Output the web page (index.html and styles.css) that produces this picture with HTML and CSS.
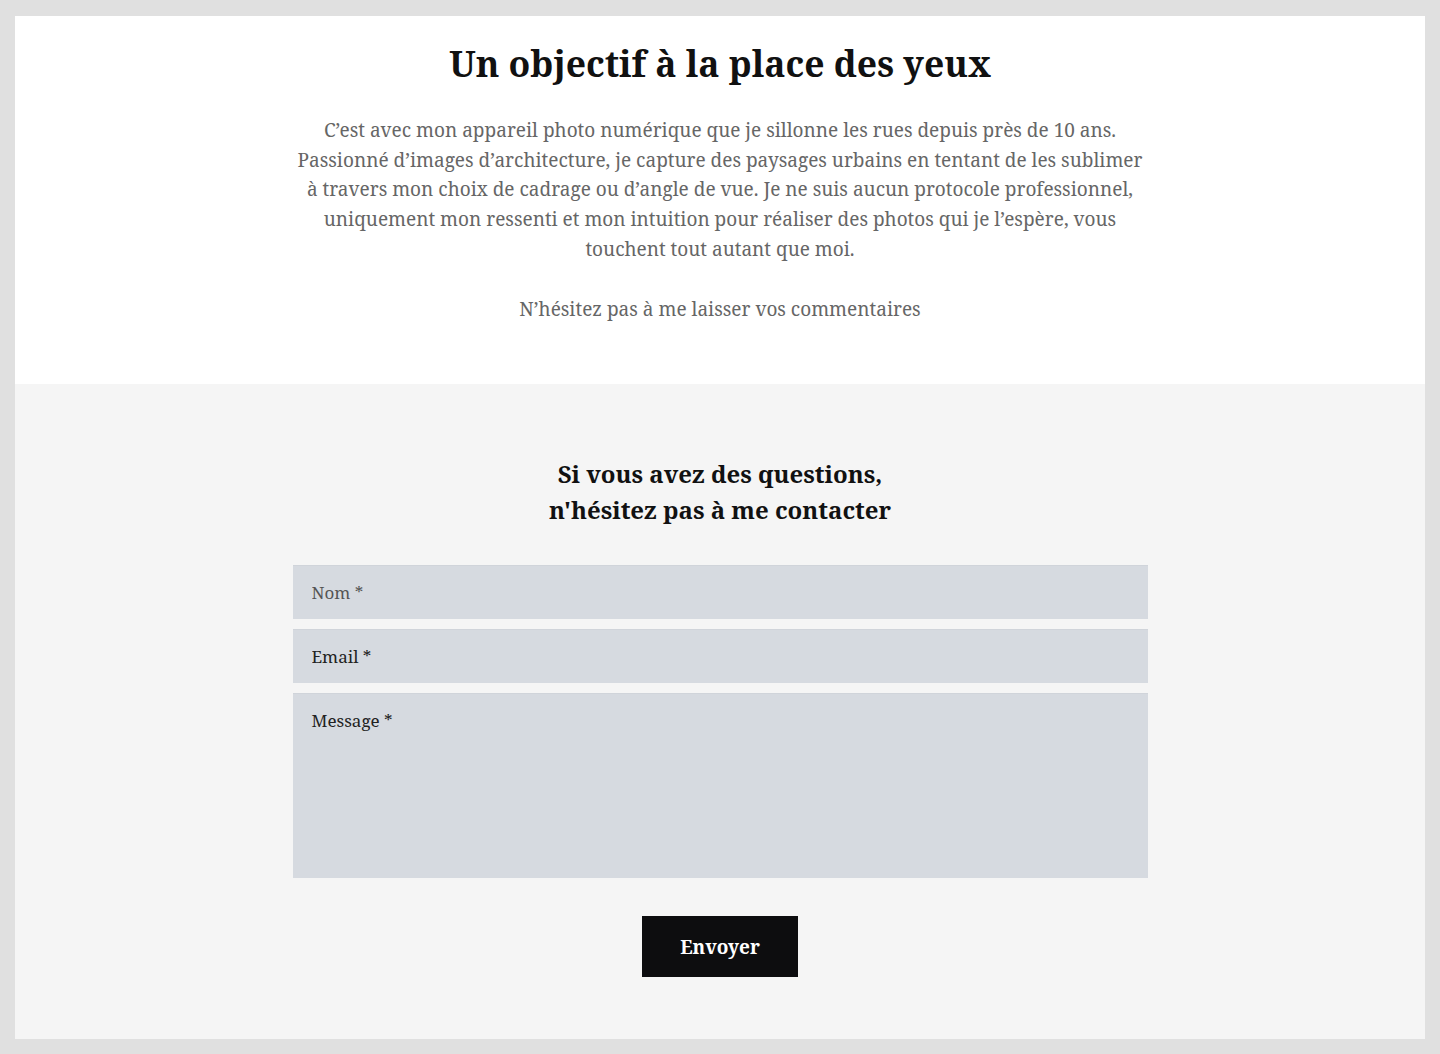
FILE: index.html
```html
<!DOCTYPE html>
<html lang="fr">
  <head>
    <meta charset="UTF-8" />
    <meta name="viewport" content="width=device-width, initial-scale=1.0" />
    <title>Un objectif à la place des yeux</title>
    <link rel="stylesheet" href="styles.css">
  </head>
  <body>
    <div class="page">
      <section class="intro">
        <h1>Un objectif à la place des yeux</h1>
        <p>
          C’est avec mon appareil photo numérique que je sillonne les rues depuis près de 10 ans.
          Passionné d’images d’architecture, je capture des paysages urbains en tentant de les sublimer
          à travers mon choix de cadrage ou d’angle de vue. Je ne suis aucun protocole professionnel,
          uniquement mon ressenti et mon intuition pour réaliser des photos qui je l’espère, vous
          touchent tout autant que moi.
        </p>
        <p>N’hésitez pas à me laisser vos commentaires</p>
      </section>

      <section class="contact">
        <h2>Si vous avez des questions,<br />n'hésitez pas à me contacter</h2>
        <form id="contactForm" class="contact-form">
          <input type="text" name="nom" class="field field-light" placeholder="Nom *" required />
          <input type="email" name="email" class="field" placeholder="Email *" required />
          <textarea name="message" class="field field-message" placeholder="Message *" required></textarea>
          <button type="submit">Envoyer</button>
        </form>
      </section>
    </div>
  </body>
</html>
```

FILE: styles.css
```css
/* General Reset */
* {
  margin: 0;
  padding: 0;
  box-sizing: border-box;
  font-family: "Noto Serif", "DejaVu Serif", serif;
}

body {
  background-color: #e0e0e0;
  padding: 16px 15px 15px;
}

.page {
  background-color: #f5f5f5;
}

/* Intro block */
.intro {
  background-color: #fff;
  text-align: center;
  padding: 24px 20px 60px;
}

.intro h1 {
  font-size: 35.5px;
  line-height: 47px;
  font-weight: 700;
  color: #111;
  margin-bottom: 29px;
}

.intro p {
  max-width: 856px;
  margin: 0 auto 30px;
  font-size: 19px;
  line-height: 29.7px;
  color: #666;
}

.intro p:last-child {
  margin-bottom: 0;
}

/* Contact block */
.contact {
  padding: 72px 20px 62px;
  text-align: center;
}

.contact h2 {
  font-size: 24px;
  line-height: 36px;
  font-weight: 700;
  color: #111;
  margin-bottom: 37px;
}

.contact-form {
  width: 855px;
  margin: 0 auto;
  display: flex;
  flex-direction: column;
  align-items: center;
  gap: 10px;
}

.field {
  width: 100%;
  height: 54px;
  padding: 0 19px;
  border: none;
  border-top: 1px solid #d0d4da;
  background-color: #d6dae0;
  font-size: 17px;
  color: #222;
  outline: none;
}

.field::placeholder {
  color: #222;
}

.field-light::placeholder {
  color: #555;
}

.field-message {
  height: 185px;
  padding-top: 16px;
  resize: none;
  line-height: 22px;
}

button {
  margin-top: 28px;
  width: 156px;
  height: 61px;
  background-color: #0d0d0f;
  color: #fff;
  border: none;
  font-size: 19px;
  font-weight: 700;
  cursor: pointer;
}

button:hover {
  background-color: #333;
}
```
